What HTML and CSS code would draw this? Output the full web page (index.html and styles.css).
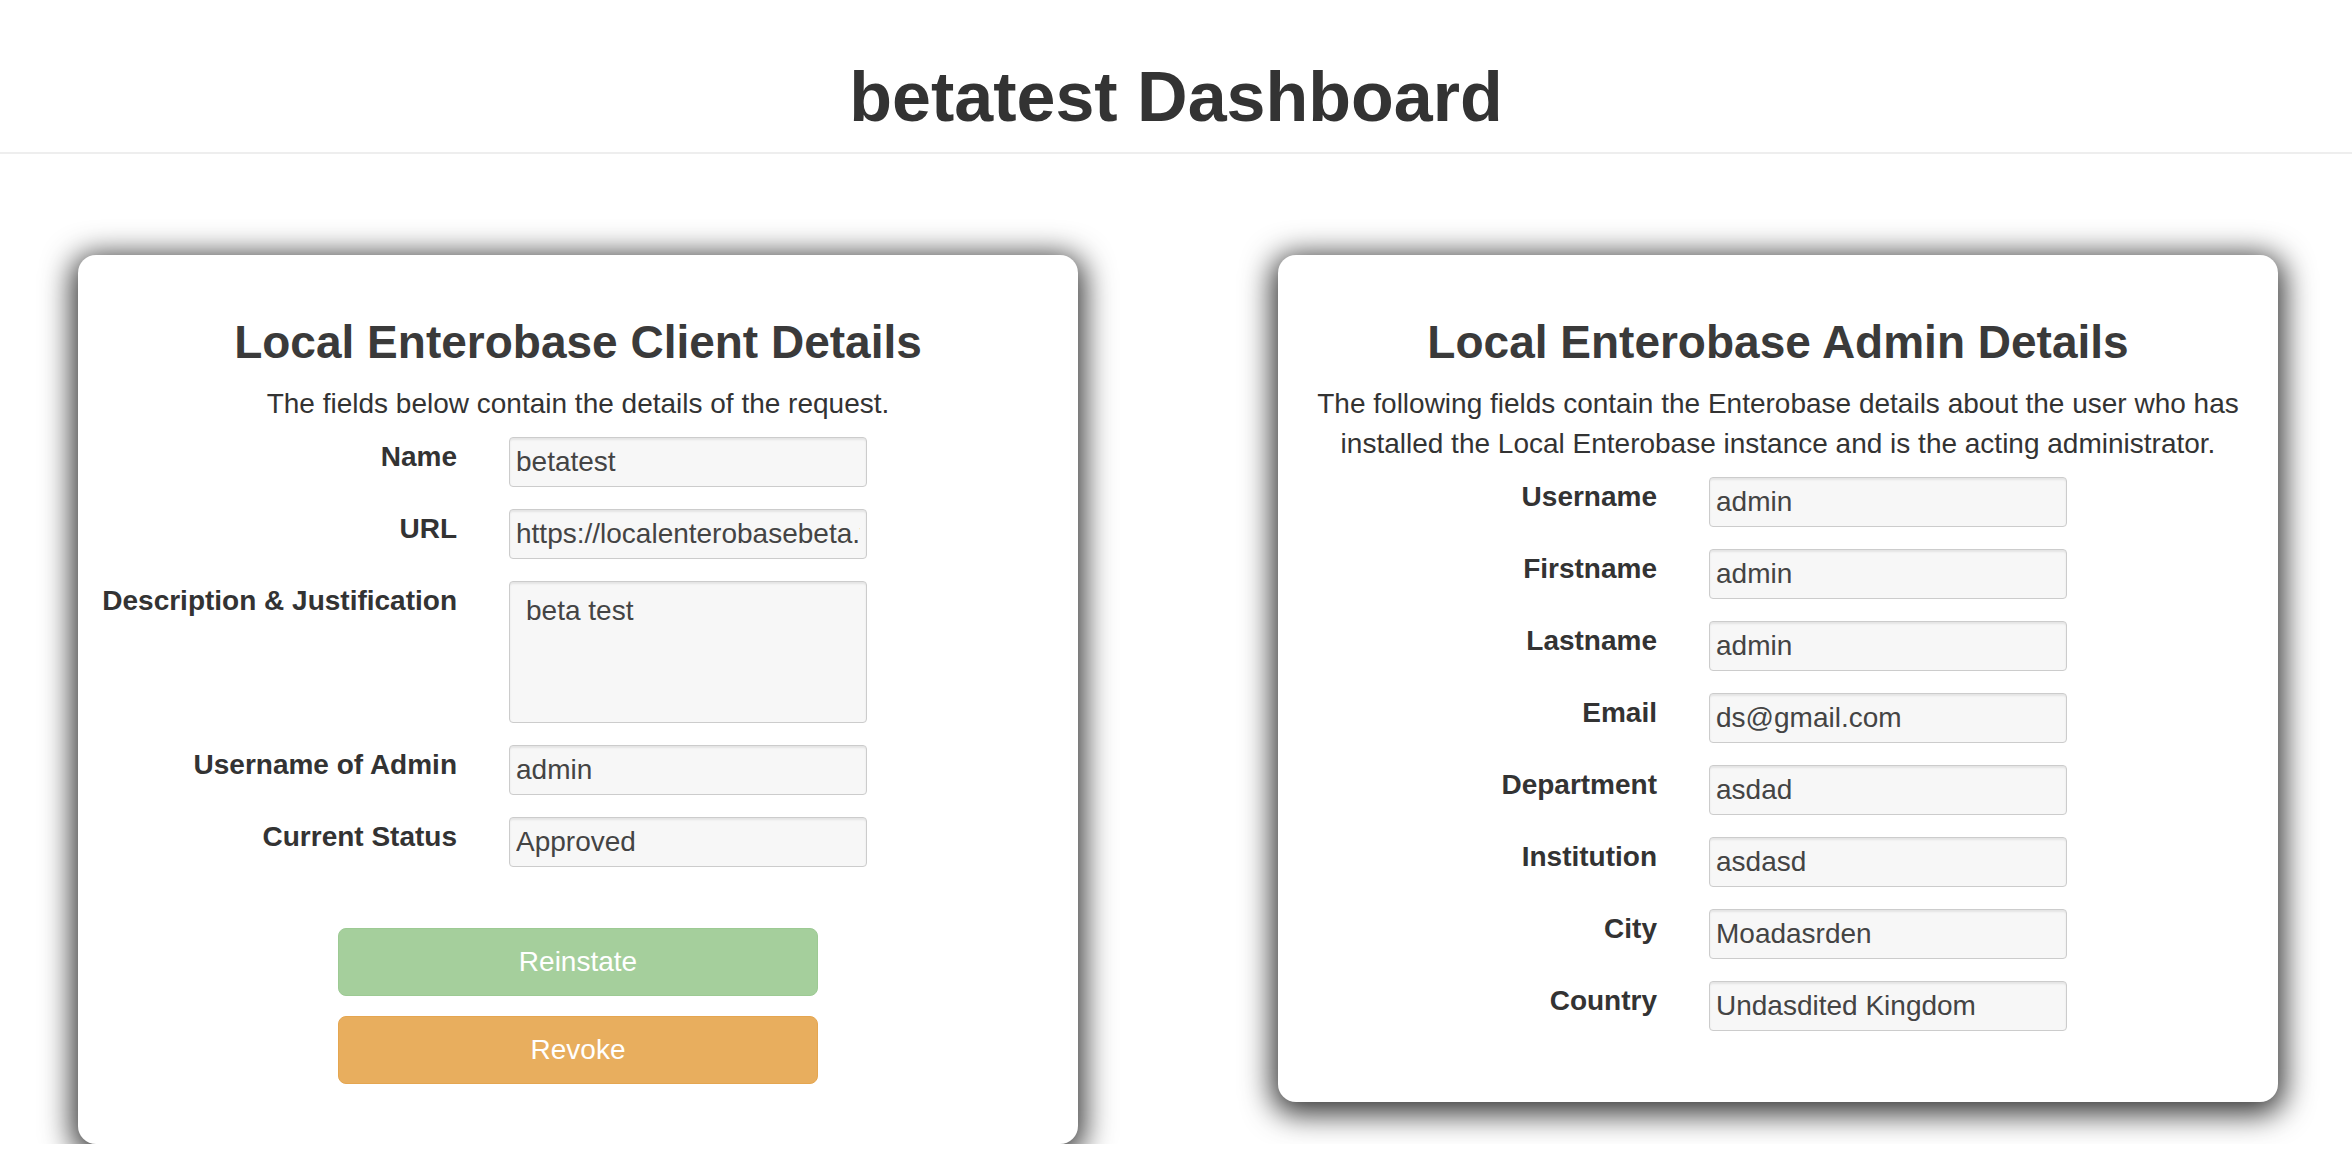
FILE: index.html
```html
<!DOCTYPE html>
<html lang="en">
<head>
<meta charset="utf-8">
<title>betatest Dashboard</title>
<link rel="stylesheet" href="styles.css">
</head>
<body>
<header class="page-header">
  <h1 class="page-title">betatest Dashboard</h1>
</header>
<main class="cards">
  <section class="card">
    <h3 class="card-title">Local Enterobase Client Details</h3>
    <p class="card-intro">The fields below contain the details of the request.</p>
    <div class="form-row">
      <label class="form-label">Name</label>
      <input class="form-field" type="text" value="betatest" readonly>
    </div>
    <div class="form-row">
      <label class="form-label">URL</label>
      <input class="form-field" type="text" value="https://localenterobasebeta.warwick.ac.uk" readonly>
    </div>
    <div class="form-row">
      <label class="form-label">Description &amp; Justification</label>
      <textarea class="form-field form-area" readonly>beta test</textarea>
    </div>
    <div class="form-row">
      <label class="form-label">Username of Admin</label>
      <input class="form-field" type="text" value="admin" readonly>
    </div>
    <div class="form-row">
      <label class="form-label">Current Status</label>
      <input class="form-field" type="text" value="Approved" readonly>
    </div>
    <div class="actions">
      <button class="btn btn-reinstate" type="button">Reinstate</button>
      <button class="btn btn-revoke" type="button">Revoke</button>
    </div>
  </section>
  <section class="card">
    <h3 class="card-title">Local Enterobase Admin Details</h3>
    <p class="card-intro">The following fields contain the Enterobase details about the user who has installed the Local Enterobase instance and is the acting administrator.</p>
    <div class="form-row">
      <label class="form-label">Username</label>
      <input class="form-field" type="text" value="admin" readonly>
    </div>
    <div class="form-row">
      <label class="form-label">Firstname</label>
      <input class="form-field" type="text" value="admin" readonly>
    </div>
    <div class="form-row">
      <label class="form-label">Lastname</label>
      <input class="form-field" type="text" value="admin" readonly>
    </div>
    <div class="form-row">
      <label class="form-label">Email</label>
      <input class="form-field" type="text" value="ds@gmail.com" readonly>
    </div>
    <div class="form-row">
      <label class="form-label">Department</label>
      <input class="form-field" type="text" value="asdad" readonly>
    </div>
    <div class="form-row">
      <label class="form-label">Institution</label>
      <input class="form-field" type="text" value="asdasd" readonly>
    </div>
    <div class="form-row">
      <label class="form-label">City</label>
      <input class="form-field" type="text" value="Moadasrden" readonly>
    </div>
    <div class="form-row">
      <label class="form-label">Country</label>
      <input class="form-field" type="text" value="Undasdited Kingdom" readonly>
    </div>
  </section>
</main>
</body>
</html>
```
FILE: styles.css
```css
* {
  box-sizing: border-box;
}

html, body {
  margin: 0;
  padding: 0;
  background: #ffffff;
}

body {
  font-family: "Liberation Sans", Arial, Helvetica, sans-serif;
  font-size: 28px;
  line-height: 40px;
  color: #333333;
}

.page-header {
  padding: 59px 0 16px;
  border-bottom: 2px solid #eeeeee;
  text-align: center;
}

.page-title {
  margin: 0;
  font-size: 70px;
  line-height: 77px;
  font-weight: bold;
  color: #333333;
}

.cards {
  display: flex;
  align-items: flex-start;
  gap: 200px;
  padding-left: 78px;
  margin-top: 101px;
}

.card {
  width: 1000px;
  background: #ffffff;
  border-radius: 18px;
  padding: 62px 0 49px;
  box-shadow: 0 6px 30px 6px rgba(0, 0, 0, 0.8);
}

.card-title {
  margin: 0 0 17px;
  font-size: 46px;
  line-height: 50px;
  font-weight: bold;
  text-align: center;
  color: #3a3a3a;
}

.card-intro {
  margin: 0 0 13px;
  padding: 0 20px;
  text-align: center;
}

.form-row {
  display: flex;
  align-items: flex-start;
  margin-bottom: 22px;
}

.form-label {
  width: 379px;
  flex: none;
  text-align: right;
  font-weight: bold;
  white-space: nowrap;
  line-height: 40px;
}

.form-field {
  flex: none;
  margin-left: 52px;
  width: 358px;
  height: 50px;
  padding: 0 6px;
  border: 1px solid #cccccc;
  border-radius: 4px;
  background: #f7f7f7;
  box-shadow: inset 0 2px 2px rgba(0, 0, 0, 0.075);
  font-family: "Liberation Sans", Arial, Helvetica, sans-serif;
  font-size: 28px;
  color: #444444;
  outline: none;
}

.form-area {
  height: 142px;
  padding: 13px 16px;
  line-height: normal;
  resize: none;
  overflow: hidden;
}

.actions {
  margin-top: 61px;
  padding-bottom: 11px;
  display: flex;
  flex-direction: column;
  align-items: center;
  gap: 20px;
}

.btn {
  width: 480px;
  height: 68px;
  border-radius: 8px;
  border: 1px solid transparent;
  font-family: "Liberation Sans", Arial, Helvetica, sans-serif;
  font-size: 28px;
  color: #ffffff;
  cursor: not-allowed;
}

.btn-reinstate {
  background: #a5cf9c;
  border-color: #9dca94;
}

.btn-revoke {
  background: #e8ae5e;
  border-color: #e5a650;
}
```
